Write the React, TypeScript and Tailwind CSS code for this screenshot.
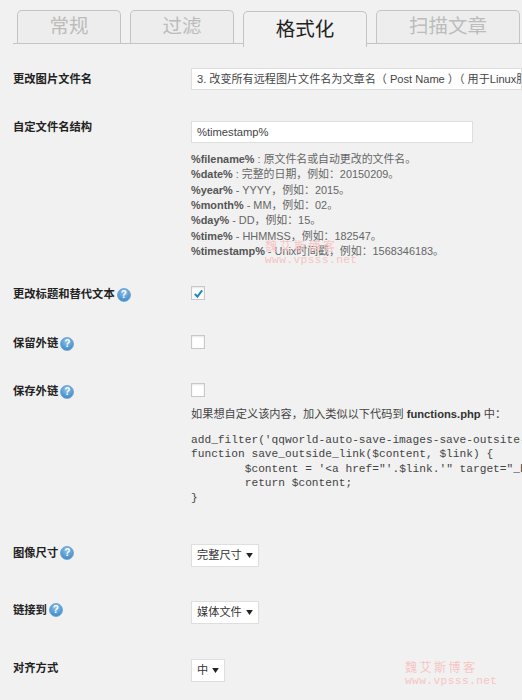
const font = "font-['Liberation_Sans','Noto_Sans_CJK_SC',sans-serif]";

function Help() {
  return (
    <span className="ml-[2px] inline-flex h-[14px] w-[14px] shrink-0 items-center justify-center rounded-full border border-[#6fa8d6] bg-[radial-gradient(circle_at_50%_30%,#8fc1e8,#2f7fc0)] text-[10px] font-bold leading-none text-white">
      ?
    </span>
  );
}

function Tab({ label, w, active }: { label: string; w: string; active?: boolean }) {
  return (
    <div
      className={
        active
          ? `${w} z-10 -mb-[4px] flex h-[36px] items-center justify-center rounded-t-[5px] border border-b-0 border-[#c4c4c4] bg-[#f1f1f1] text-[19.5px] text-[#222]`
          : `${w} flex h-[33px] items-center justify-center rounded-t-[5px] border border-b-0 border-[#c4c4c4] bg-[#ededed] text-[19.5px] text-[#bcbcbc]`
      }
    >
      {label}
    </div>
  );
}

function Row({ label, help, h, lh = "h-[17px]", children }: { label: string; help?: boolean; h: string; lh?: string; children: React.ReactNode }) {
  return (
    <div className={`${h} flex pl-[13px]`}>
      <div className={`${lh} flex w-[178px] shrink-0 items-center whitespace-nowrap text-[11.3px] font-bold text-[#222]`}>
        {label}
        {help && <Help />}
      </div>
      <div className="min-w-0 flex-1">{children}</div>
    </div>
  );
}

function Checkbox({ checked }: { checked?: boolean }) {
  return (
    <div className="flex h-[14px] w-[14px] items-center justify-center border border-[#c8c8c8] bg-white shadow-[inset_0_1px_2px_rgba(0,0,0,0.1)]">
      {checked && (
        <svg viewBox="0 0 12 12" className="h-[11px] w-[11px]">
          <path d="M2 6.5 L4.8 9.5 L10 2.5" fill="none" stroke="#1e8cbe" strokeWidth="2.2" />
        </svg>
      )}
    </div>
  );
}

function Select({ label, w }: { label: string; w: string }) {
  return (
    <div className={`${w} flex h-[23px] items-center justify-between whitespace-nowrap border border-[#dedede] bg-white pl-[5px] pr-[5px] text-[11.2px] text-[#333]`}>
      <span>{label}</span>
      <svg viewBox="0 0 8 6" className="h-[5px] w-[7px]">
        <path d="M0 0 H8 L4 6 Z" fill="#222" />
      </svg>
    </div>
  );
}

function Desc({ k, v }: { k: string; v: string }) {
  return (
    <div className="h-[15.35px] whitespace-nowrap">
      <b className="font-bold text-[#555]">{k}</b>
      {v}
    </div>
  );
}

function Watermark({ className }: { className: string }) {
  return (
    <div className={`pointer-events-none absolute text-[#f7c4c4] ${className}`}>
      <div className="text-[12px] leading-[14px] tracking-[2.5px]">魏艾斯博客</div>
      <div className="font-['Liberation_Mono',monospace] text-[11.2px] leading-[13px] tracking-[0.4px]">www.vpsss.net</div>
    </div>
  );
}

export default function App() {
  return (
    <div className={`${font} relative h-[700px] w-[522px] overflow-hidden bg-[#f1f1f1]`}>
      <div className="ml-[13px] flex h-[44px] items-end gap-[9px] overflow-visible border-b border-[#c4c4c4] pl-[4px]">
        <Tab label="常规" w="w-[104px]" />
        <Tab label="过滤" w="w-[104px]" />
        <Tab label="格式化" w="w-[124px]" active />
        <Tab label="扫描文章" w="w-[144px]" />
      </div>

      <div className="pt-[24px]">
        <Row label="更改图片文件名" h="h-[51px]" lh="h-[22px]">
          <div className="h-[22px] overflow-hidden whitespace-nowrap border border-[#dedede] bg-white pl-[5px] text-[11.1px] leading-[20px] text-[#444]">
            3. 改变所有远程图片文件名为文章名（ Post Name ）（ 用于Linux服务器）
          </div>
        </Row>
        <Row label="自定文件名结构" h="h-[167px]">
          <input
            readOnly
            value="%timestamp%"
            className="h-[22px] w-[282px] border border-[#dedede] bg-white pl-[5px] text-[11.2px] text-[#444] outline-none"
          />
          <div className="mt-[9px] text-[10.9px] leading-[15.35px] text-[#666]">
            <Desc k="%filename%" v=" : 原文件名或自动更改的文件名。" />
            <Desc k="%date%" v=" : 完整的日期，例如：20150209。" />
            <Desc k="%year%" v=" - YYYY，例如：2015。" />
            <Desc k="%month%" v=" - MM，例如：02。" />
            <Desc k="%day%" v=" - DD，例如：15。" />
            <Desc k="%time%" v=" - HHMMSS，例如：182547。" />
            <Desc k="%timestamp%" v=" - Unix时间戳，例如：1568346183。" />
          </div>
        </Row>
        <Row label="更改标题和替代文本" help h="h-[49px]">
          <Checkbox checked />
        </Row>
        <Row label="保留外链" help h="h-[48px]">
          <Checkbox />
        </Row>
        <Row label="保存外链" help h="h-[161px]">
          <Checkbox />
          <div className="mt-[10px] whitespace-nowrap text-[11.2px] leading-[15px] text-[#444]">
            如果想自定义该内容，加入类似以下代码到 <b className="font-bold text-[#333]">functions.php</b> 中：
          </div>
          <pre className="mt-[11px] font-['Liberation_Mono',monospace] text-[11.2px] leading-[14.4px] text-[#444] [tab-size:8]">
{`add_filter('qqworld-auto-save-images-save-outsite-link', 'save_outside_link', 10, 2);
function save_outside_link($content, $link) {
	$content = '<a href="'.$link.'" target="_blank" rel="nofollow">'.$content.'</a>';
	return $content;
}`}
          </pre>
        </Row>
        <Row label="图像尺寸" help h="h-[57px]" lh="h-[18px]">
          <Select label="完整尺寸" w="w-[68px]" />
        </Row>
        <Row label="链接到" help h="h-[58px]" lh="h-[18px]">
          <Select label="媒体文件" w="w-[68px]" />
        </Row>
        <Row label="对齐方式" h="h-[40px]" lh="h-[18px]">
          <Select label="中" w="w-[34px]" />
        </Row>
      </div>

      <Watermark className="left-[265px] top-[240px]" />
      <Watermark className="left-[405px] top-[661px]" />
    </div>
  );
}
